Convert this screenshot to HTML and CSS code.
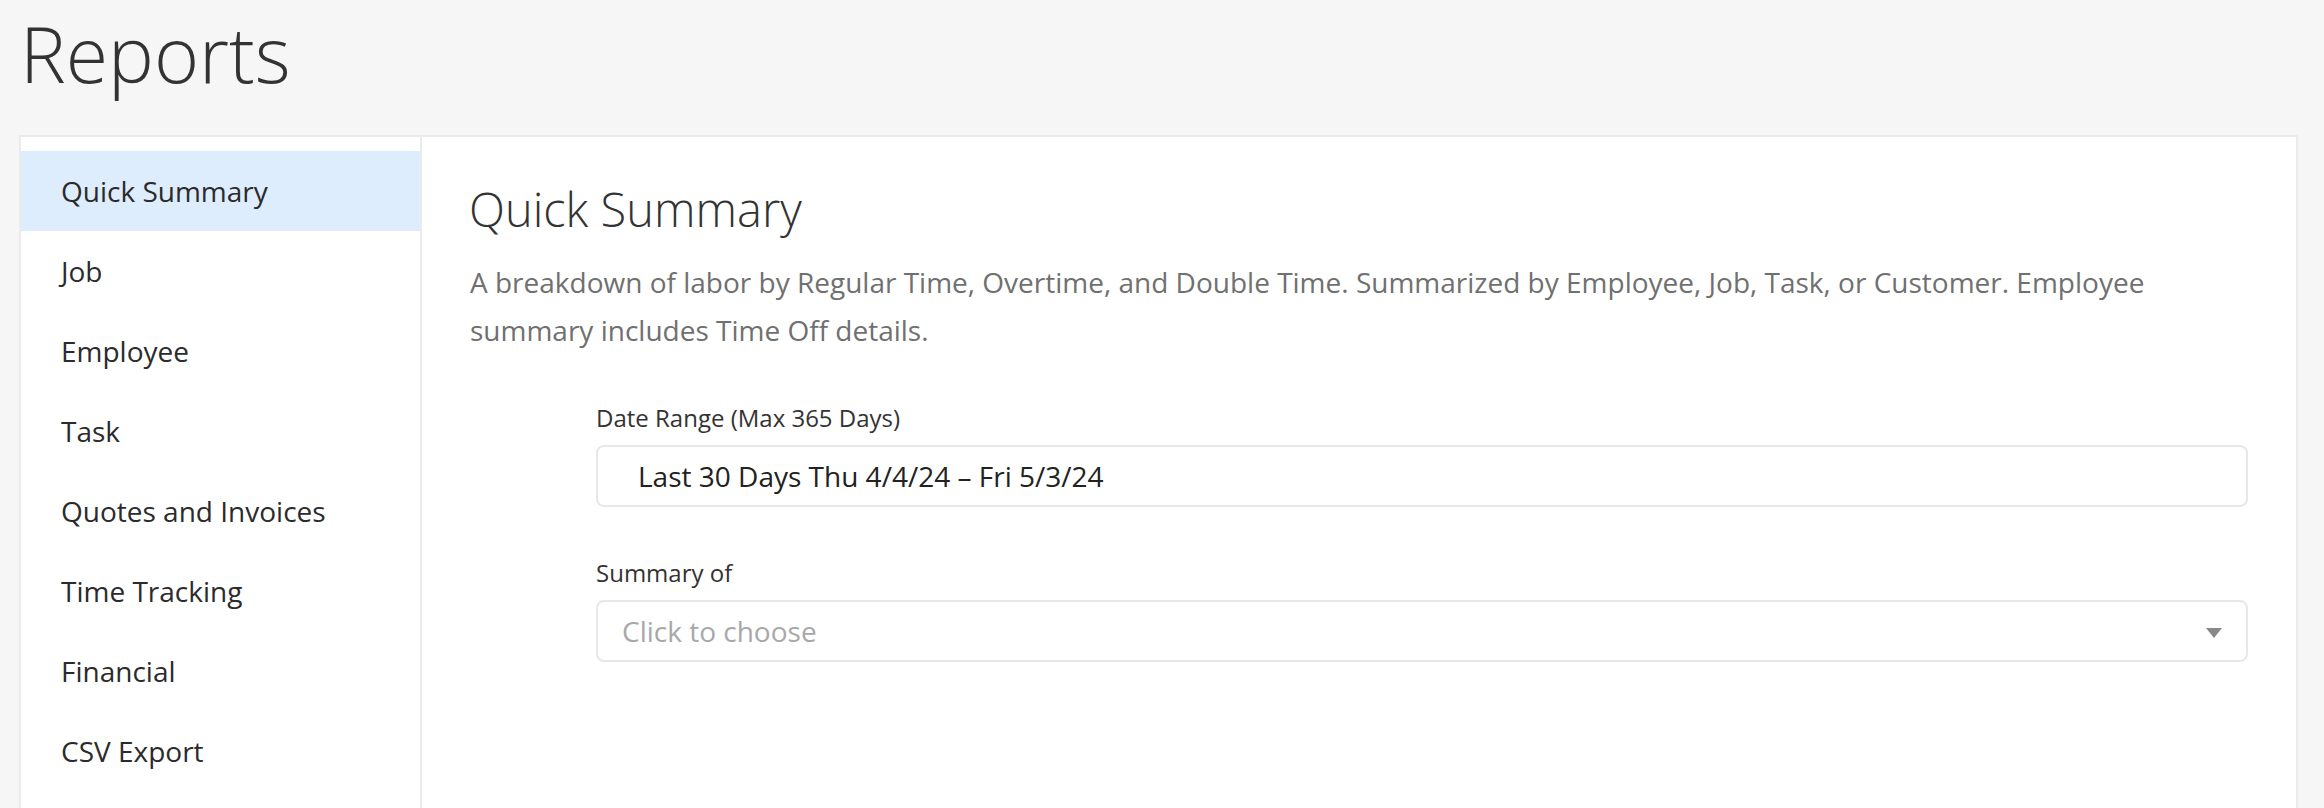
FILE: index.html
```html
<!DOCTYPE html>
<html lang="en">
<head>
<meta charset="utf-8">
<title>Reports</title>
<link rel="stylesheet" href="styles.css">
</head>
<body>
<div class="page">
  <header class="page-header">
    <h1 class="page-title">Reports</h1>
  </header>
  <div class="panel">
    <nav class="sidebar">
      <a class="nav-item active">Quick Summary</a>
      <a class="nav-item">Job</a>
      <a class="nav-item">Employee</a>
      <a class="nav-item">Task</a>
      <a class="nav-item">Quotes and Invoices</a>
      <a class="nav-item">Time Tracking</a>
      <a class="nav-item">Financial</a>
      <a class="nav-item">CSV Export</a>
    </nav>
    <main class="content">
      <h2 class="content-title">Quick Summary</h2>
      <p class="content-desc">A breakdown of labor by Regular Time, Overtime, and Double Time. Summarized by Employee, Job, Task, or Customer. Employee summary includes Time Off details.</p>
      <form class="form">
        <div class="field">
          <label class="field-label">Date Range (Max 365 Days)</label>
          <div class="input date-input">Last 30 Days Thu 4/4/24 – Fri 5/3/24</div>
        </div>
        <div class="field">
          <label class="field-label">Summary of</label>
          <div class="input select-input">
            <span class="placeholder">Click to choose</span>
            <svg class="caret" width="16" height="10" viewBox="0 0 16 10"><path d="M0 0 H16 L8 10 Z" fill="#888"/></svg>
          </div>
        </div>
      </form>
    </main>
  </div>
</div>
</body>
</html>
```
FILE: styles.css
```css
* { box-sizing: border-box; }
html, body { margin: 0; padding: 0; }
body {
  background: #f6f6f6;
  font-family: "Open Sans", "Liberation Sans", sans-serif;
  color: #333;
  height: 808px;
  overflow: hidden;
}
.page {
  padding: 0 26px 0 19px;
}
.page-header {
  padding: 16px 0 0 1px;
}
.page-title {
  margin: 0 0 43px 0;
  font-size: 77px;
  font-weight: 300;
  line-height: 76px;
  color: #333;
}
.panel {
  display: flex;
  background: #fff;
  border: 2px solid #ebebeb;
  border-bottom: none;
  min-height: 700px;
}
.sidebar {
  width: 401px;
  flex: none;
  padding-top: 14px;
  border-right: 2px solid #ebebeb;
  display: flex;
  flex-direction: column;
}
.nav-item {
  display: block;
  height: 80px;
  line-height: 80px;
  padding-left: 40px;
  font-size: 28px;
  color: #2b2b2b;
  text-decoration: none;
}
.nav-item.active {
  background: #deedfd;
}
.content {
  flex: 1;
  padding: 44px 48px 0 47px;
}
.content-title {
  margin: 0;
  font-size: 47px;
  font-weight: 300;
  line-height: 56px;
  color: #333;
}
.content-desc {
  margin: 21px 0 0 1px;
  font-size: 28px;
  line-height: 48px;
  color: #707070;
}
.form {
  margin: 47px 0 0 127px;
  display: flex;
  flex-direction: column;
  gap: 49px;
}
.field {
  display: flex;
  flex-direction: column;
}
.field-label {
  font-size: 24px;
  line-height: 34px;
  color: #333;
  margin-bottom: 10px;
}
.input {
  height: 62px;
  border: 2px solid #e8e8e8;
  border-radius: 8px;
  font-size: 28px;
  line-height: 58px;
}
.date-input {
  padding-left: 40px;
  color: #222;
}
.select-input {
  display: flex;
  align-items: center;
  justify-content: space-between;
  padding: 0 24px 0 24px;
}
.placeholder {
  color: #a8a8a8;
}
.caret {
  display: block;
  margin-top: 4px;
}
```
